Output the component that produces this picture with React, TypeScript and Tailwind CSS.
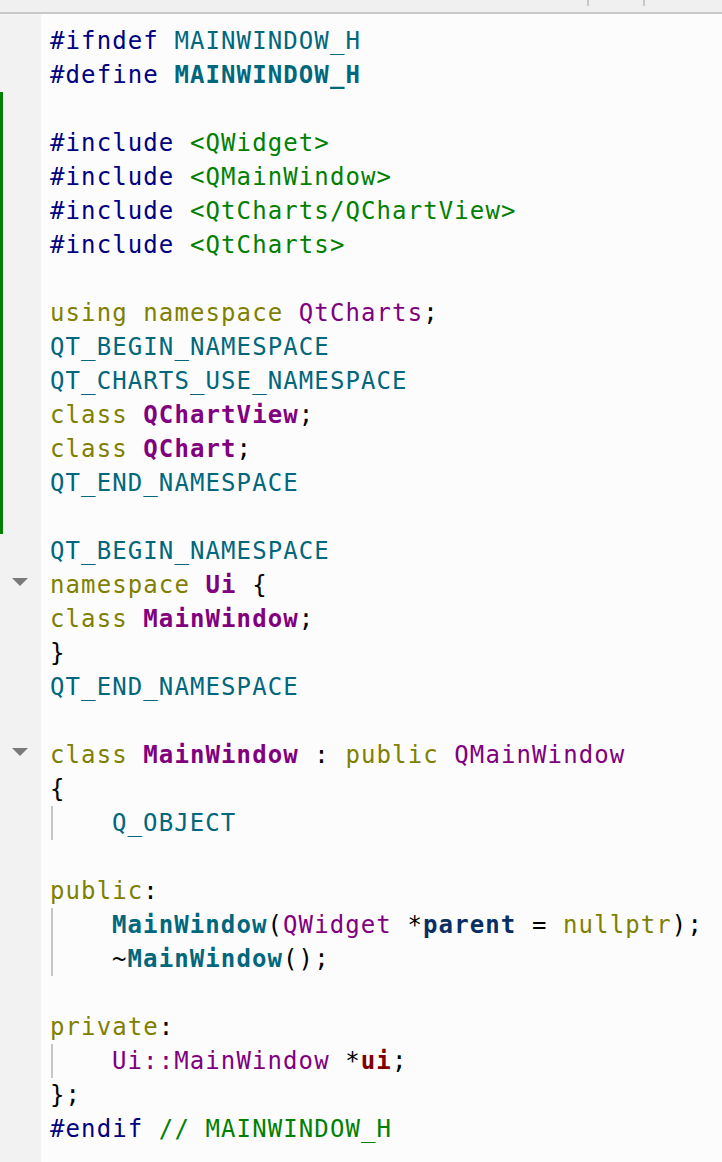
type Kind = 'pp' | 'mac' | 'macB' | 'str' | 'kw' | 'ty' | 'tyB' | 'p' | 'fn' | 'par' | 'mem' | 'cm';
type Tok = [string, Kind];

const colors: Record<Kind, string> = {
  pp: 'text-[#000080]',
  mac: 'text-[#00677c]',
  macB: 'text-[#00677c] font-bold',
  str: 'text-[#008000]',
  kw: 'text-[#808000]',
  ty: 'text-[#800080]',
  tyB: 'text-[#800080] font-bold',
  p: 'text-[#000000]',
  fn: 'text-[#00677c] font-bold',
  par: 'text-[#092e64] font-bold',
  mem: 'text-[#800000] font-bold',
  cm: 'text-[#008000]',
};

type Line = { toks: Tok[]; indent?: boolean; fold?: boolean; changed?: boolean };

const lines: Line[] = [
  { toks: [['#ifndef ', 'pp'], ['MAINWINDOW_H', 'mac']] },
  { toks: [['#define ', 'pp'], ['MAINWINDOW_H', 'macB']] },
  { toks: [], changed: true },
  { toks: [['#include ', 'pp'], ['<QWidget>', 'str']], changed: true },
  { toks: [['#include ', 'pp'], ['<QMainWindow>', 'str']], changed: true },
  { toks: [['#include ', 'pp'], ['<QtCharts/QChartView>', 'str']], changed: true },
  { toks: [['#include ', 'pp'], ['<QtCharts>', 'str']], changed: true },
  { toks: [], changed: true },
  { toks: [['using namespace ', 'kw'], ['QtCharts', 'ty'], [';', 'p']], changed: true },
  { toks: [['QT_BEGIN_NAMESPACE', 'mac']], changed: true },
  { toks: [['QT_CHARTS_USE_NAMESPACE', 'mac']], changed: true },
  { toks: [['class ', 'kw'], ['QChartView', 'tyB'], [';', 'p']], changed: true },
  { toks: [['class ', 'kw'], ['QChart', 'tyB'], [';', 'p']], changed: true },
  { toks: [['QT_END_NAMESPACE', 'mac']], changed: true },
  { toks: [], changed: true },
  { toks: [['QT_BEGIN_NAMESPACE', 'mac']] },
  { toks: [['namespace ', 'kw'], ['Ui', 'tyB'], [' {', 'p']], fold: true },
  { toks: [['class ', 'kw'], ['MainWindow', 'tyB'], [';', 'p']] },
  { toks: [['}', 'p']] },
  { toks: [['QT_END_NAMESPACE', 'mac']] },
  { toks: [] },
  { toks: [['class ', 'kw'], ['MainWindow', 'tyB'], [' : ', 'p'], ['public ', 'kw'], ['QMainWindow', 'ty']], fold: true },
  { toks: [['{', 'p']] },
  { toks: [['Q_OBJECT', 'mac']], indent: true },
  { toks: [] },
  { toks: [['public', 'kw'], [':', 'p']] },
  {
    toks: [['MainWindow', 'fn'], ['(', 'p'], ['QWidget', 'ty'], [' *', 'p'], ['parent', 'par'], [' = ', 'p'], ['nullptr', 'kw'], [');', 'p']],
    indent: true,
  },
  { toks: [['~', 'p'], ['MainWindow', 'fn'], ['();', 'p']], indent: true },
  { toks: [] },
  { toks: [['private', 'kw'], [':', 'p']] },
  { toks: [['Ui::MainWindow', 'ty'], [' *', 'p'], ['ui', 'mem'], [';', 'p']], indent: true },
  { toks: [['};', 'p']] },
  { toks: [['#endif ', 'pp'], ['// MAINWINDOW_H', 'cm']] },
];

function FoldArrow() {
  return (
    <svg width="16" height="8" viewBox="0 0 16 8">
      <path d="M0 0 L16 0 L8 8 Z" fill="#7a7a7a" />
    </svg>
  );
}

export default function App() {
  return (
    <div className="flex min-h-screen w-[722px] flex-col bg-[#fcfcfc] font-['DejaVu_Sans_Mono',monospace]">
      <div className="relative h-[14px] shrink-0 border-b-2 border-[#c8c8c8] bg-[#f0f0f0]">
        <div className="absolute left-[587px] top-0 h-[6px] w-[2px] bg-[#c8c8c8]" />
        <div className="absolute left-[643px] top-0 h-[6px] w-[2px] bg-[#c8c8c8]" />
      </div>

      <div className="flex flex-1">
        {/* gutter: change marker + fold arrows */}
        <div className="w-[41px] shrink-0 bg-[#f2f2f2] pt-[10px]">
          {lines.map((ln, i) => (
            <div
              key={i}
              className={`h-[34px] pt-[10px] ${ln.changed ? 'border-l-[3px] border-[#008000] pl-[9px]' : 'pl-[12px]'}`}
            >
              {ln.fold ? <FoldArrow /> : null}
            </div>
          ))}
        </div>

        <div className="flex-1 pl-[9px] pt-[10px] text-[24px] tracking-[1.1px]">
          {lines.map((ln, i) => (
            <div key={i} className="flex h-[34px] items-center whitespace-pre leading-[34px]">
              {ln.indent ? <span className="ml-px w-[61px] self-stretch border-l-2 border-[#c6c6c6]" /> : null}
              {ln.toks.map(([t, k], j) => (
                <span key={j} className={colors[k]}>
                  {t}
                </span>
              ))}
            </div>
          ))}
        </div>
      </div>
    </div>
  );
}
